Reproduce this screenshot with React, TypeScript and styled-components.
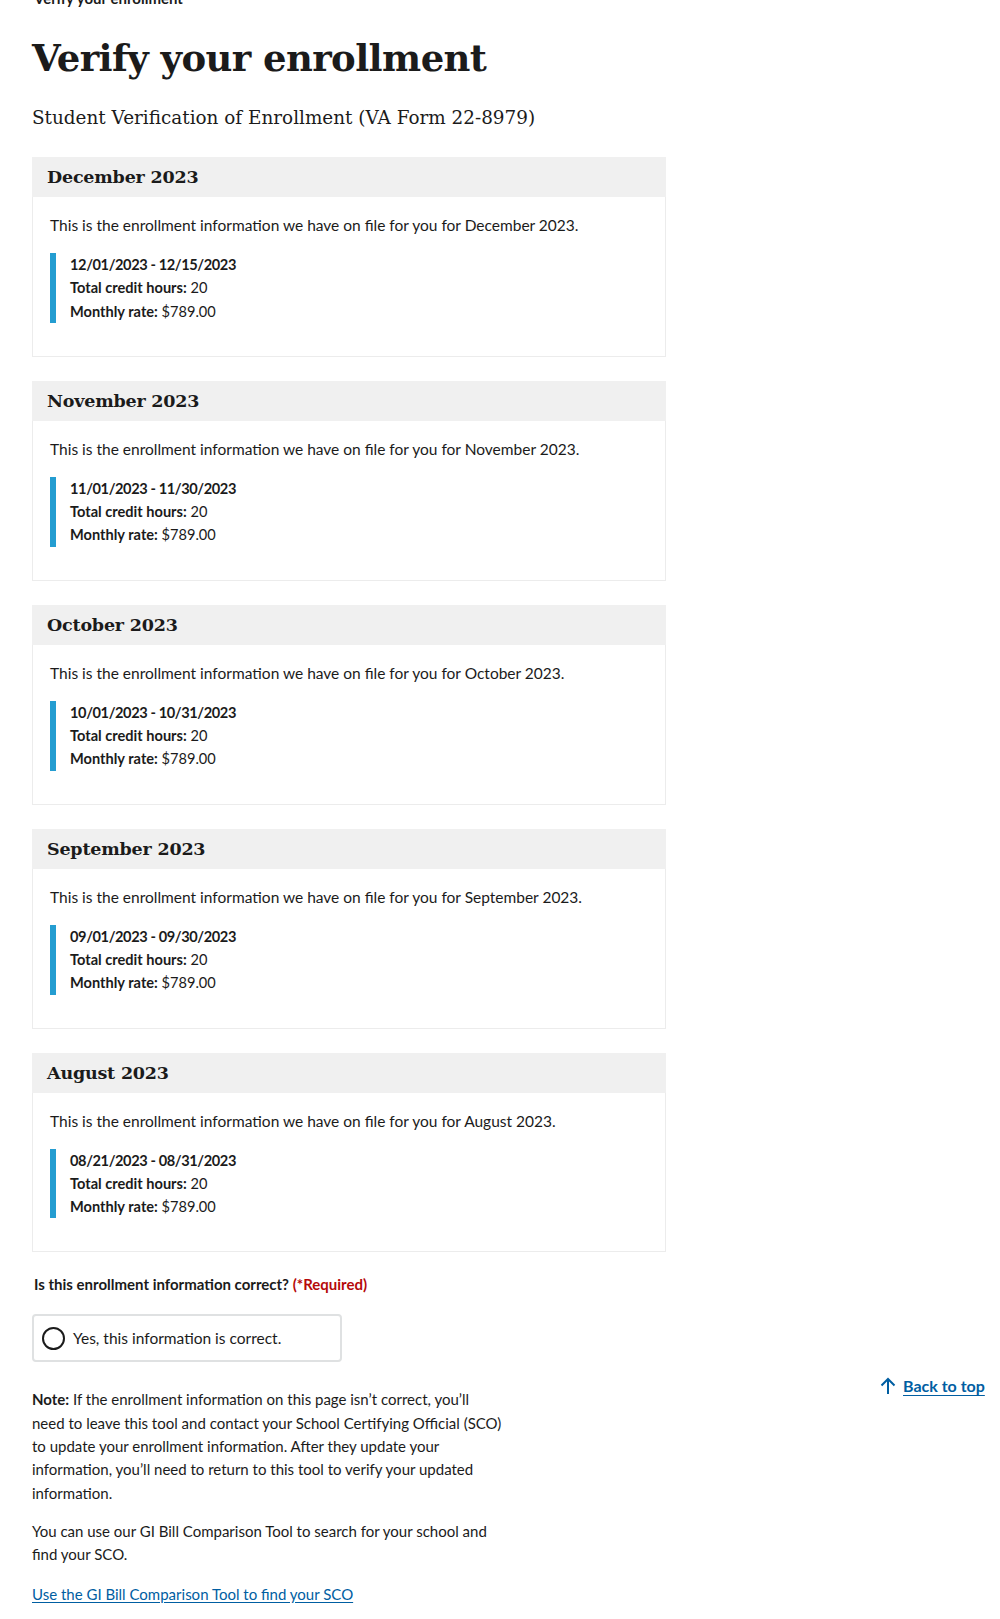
import React from "react";
import styled, { createGlobalStyle } from "styled-components";

const GlobalStyle = createGlobalStyle`
  html, body { margin: 0; padding: 0; background: #ffffff; }
  body {
    font-family: "Lato", "Liberation Sans", sans-serif;
    color: #1b1b1b;
    -webkit-font-smoothing: antialiased;
  }
  * { box-sizing: border-box; }
`;

const Page = styled.div`
  position: relative;
  width: 1000px;
  padding: 0 0 0 32px;
`;

const Main = styled.main`
  width: 634px;
  display: flex;
  flex-direction: column;
`;

const CutLabel = styled.div`
  font-size: 15px;
  font-weight: 700;
  line-height: 20px;
  margin-top: -12px;
  padding-left: 2px;
`;

const Title = styled.h1`
  font-family: "DejaVu Serif", serif;
  font-weight: 700;
  font-size: 37px;
  line-height: 48px;
  margin: 26px 0 0 0;
  letter-spacing: -0.6px;
`;

const Subtitle = styled.p`
  font-family: "DejaVu Serif", serif;
  font-size: 18.4px;
  line-height: 28px;
  margin: 22px 0 25px 0;
`;

const CardList = styled.div`
  display: flex;
  flex-direction: column;
  gap: 24px;
`;

const Card = styled.section`
  border: 1px solid #ececec;
  border-top: none;
`;

const CardHeader = styled.h2`
  margin: 0 -1px;
  background: #f0f0f0;
  font-family: "DejaVu Serif", serif;
  font-weight: 700;
  font-size: 17.5px;
  letter-spacing: -0.2px;
  line-height: 40px;
  padding: 0 15px;
`;

const CardBody = styled.div`
  padding: 16px 16px 33px 17px;
`;

const Intro = styled.p`
  margin: 0 0 16px 0;
  font-size: 15.5px;
  line-height: 24px;
`;

const Period = styled.div`
  border-left: 6px solid #249dd1;
  padding-left: 14px;
  display: flex;
  flex-direction: column;
`;

const DataLine = styled.div`
  font-size: 14.6px;
  line-height: 23.3px;
`;

const DateRange = styled.strong`
  letter-spacing: -0.4px;
`;

const Question = styled.div`
  margin-top: 20px;
  font-size: 15px;
  font-weight: 700;
  line-height: 24px;
  padding-left: 2px;
`;

const Required = styled.span`
  color: #b50909;
`;

const RadioTile = styled.label`
  margin-top: 18px;
  width: 310px;
  height: 48px;
  border: 2px solid #dfe1e2;
  border-radius: 4px;
  display: flex;
  align-items: center;
  gap: 8px;
  padding-left: 8px;
  font-size: 15.5px;
`;

const RadioCircle = styled.span`
  width: 23px;
  height: 23px;
  border-radius: 50%;
  border: 2px solid #1b1b1b;
  flex: none;
`;

const NoteBlock = styled.div`
  width: 470px;
  margin-top: 26px;
  display: flex;
  flex-direction: column;
  gap: 15px;
`;

const Paragraph = styled.p`
  margin: 0;
  font-size: 15px;
  line-height: 23.3px;
`;

const TextLink = styled.a`
  margin-top: 1px;
  color: #005ea2;
  font-size: 15px;
  line-height: 23.3px;
  text-decoration: underline;
  text-underline-offset: 2px;
  align-self: flex-start;
`;

const BackToTop = styled.a`
  position: absolute;
  left: 880px;
  top: 1376px;
  display: flex;
  align-items: center;
  gap: 7px;
  color: #005ea2;
  font-weight: 700;
  font-size: 16px;
  text-decoration: underline;
  text-underline-offset: 3px;
`;

const enrollments = [
  { month: "December 2023", range: "12/01/2023 - 12/15/2023" },
  { month: "November 2023", range: "11/01/2023 - 11/30/2023" },
  { month: "October 2023", range: "10/01/2023 - 10/31/2023" },
  { month: "September 2023", range: "09/01/2023 - 09/30/2023" },
  { month: "August 2023", range: "08/21/2023 - 08/31/2023" },
];

export default function App() {
  return (
    <>
      <GlobalStyle />
      <Page>
        <Main>
          <CutLabel>Verify your enrollment</CutLabel>
          <Title>Verify your enrollment</Title>
          <Subtitle>Student Verification of Enrollment (VA Form 22-8979)</Subtitle>
          <CardList>
            {enrollments.map((e) => (
              <Card key={e.month}>
                <CardHeader>{e.month}</CardHeader>
                <CardBody>
                  <Intro>
                    This is the enrollment information we have on file for you for {e.month}.
                  </Intro>
                  <Period>
                    <DataLine>
                      <DateRange>{e.range}</DateRange>
                    </DataLine>
                    <DataLine>
                      <strong>Total credit hours:</strong> 20
                    </DataLine>
                    <DataLine>
                      <strong>Monthly rate:</strong> $789.00
                    </DataLine>
                  </Period>
                </CardBody>
              </Card>
            ))}
          </CardList>
          <Question>
            Is this enrollment information correct? <Required>(*Required)</Required>
          </Question>
          <RadioTile>
            <RadioCircle />
            Yes, this information is correct.
          </RadioTile>
          <NoteBlock>
            <Paragraph>
              <strong>Note:</strong> If the enrollment information on this page isn’t correct, you’ll
              need to leave this tool and contact your School Certifying Official (SCO) to update
              your enrollment information. After they update your information, you’ll need to return
              to this tool to verify your updated information.
            </Paragraph>
            <Paragraph>
              You can use our GI Bill Comparison Tool to search for your school and find your SCO.
            </Paragraph>
            <TextLink href="#">Use the GI Bill Comparison Tool to find your SCO</TextLink>
          </NoteBlock>
        </Main>
        <BackToTop href="#">
          <svg width="16" height="18" viewBox="0 0 16 18" fill="none" stroke="#005ea2" strokeWidth="2">
            <path d="M8 17V2M1.5 8.5L8 2l6.5 6.5" />
          </svg>
          Back to top
        </BackToTop>
      </Page>
    </>
  );
}
